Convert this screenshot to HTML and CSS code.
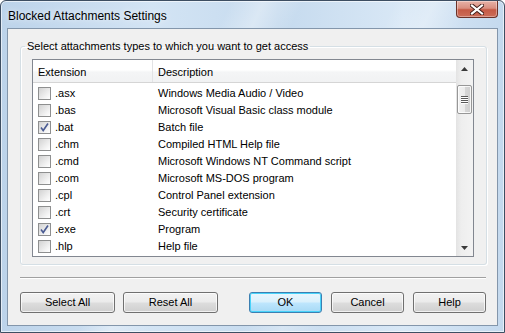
FILE: index.html
```html
<!DOCTYPE html>
<html>
<head>
<meta charset="utf-8">
<link rel="stylesheet" href="styles.css">
</head>
<body>
<div class="window">
  <div class="titlebar">
    <span class="title">Blocked Attachments Settings</span>
    <div class="close">
      <svg width="14" height="11" viewBox="0 0 14 11"><path d="M2 1.5 L12 9.5 M12 1.5 L2 9.5" stroke="#3d1a16" stroke-width="4" stroke-linecap="square"/><path d="M2 1.5 L12 9.5 M12 1.5 L2 9.5" stroke="#fff" stroke-width="2.2" stroke-linecap="square"/></svg>
    </div>
  </div>
  <div class="client">
    <fieldset class="group">
      <legend class="legend">Select attachments types to which you want to get access</legend>
      <div class="list">
        <div class="list-main">
          <div class="header">
            <div class="hcell hext">Extension</div>
            <div class="hcell hdesc">Description</div>
          </div>
          <div class="rows">
            <div class="row"><span class="cb"></span><span class="ext">.asx</span><span class="desc">Windows Media Audio / Video</span></div>
            <div class="row"><span class="cb"></span><span class="ext">.bas</span><span class="desc">Microsoft Visual Basic class module</span></div>
            <div class="row"><span class="cb checked"><svg width="11" height="11" viewBox="0 0 11 11"><path d="M2 5.5 L4.2 8.5 L9 1.5" fill="none" stroke="#4b5c93" stroke-width="1.6"/></svg></span><span class="ext">.bat</span><span class="desc">Batch file</span></div>
            <div class="row"><span class="cb"></span><span class="ext">.chm</span><span class="desc">Compiled HTML Help file</span></div>
            <div class="row"><span class="cb"></span><span class="ext">.cmd</span><span class="desc">Microsoft Windows NT Command script</span></div>
            <div class="row"><span class="cb"></span><span class="ext">.com</span><span class="desc">Microsoft MS-DOS program</span></div>
            <div class="row"><span class="cb"></span><span class="ext">.cpl</span><span class="desc">Control Panel extension</span></div>
            <div class="row"><span class="cb"></span><span class="ext">.crt</span><span class="desc">Security certificate</span></div>
            <div class="row"><span class="cb checked"><svg width="11" height="11" viewBox="0 0 11 11"><path d="M2 5.5 L4.2 8.5 L9 1.5" fill="none" stroke="#4b5c93" stroke-width="1.6"/></svg></span><span class="ext">.exe</span><span class="desc">Program</span></div>
            <div class="row"><span class="cb"></span><span class="ext">.hlp</span><span class="desc">Help file</span></div>
          </div>
        </div>
        <div class="scrollbar">
          <div class="arrow"><svg width="7" height="4" viewBox="0 0 7 4"><path d="M0 4 L3.5 0 L7 4 Z" fill="#3a3a3a"/></svg></div>
          <div class="thumb"><span class="grip"></span><span class="grip"></span><span class="grip"></span><span class="grip"></span></div>
          <div class="track"></div>
          <div class="arrow"><svg width="7" height="4" viewBox="0 0 7 4"><path d="M0 0 L7 0 L3.5 4 Z" fill="#3a3a3a"/></svg></div>
        </div>
      </div>
    </fieldset>
    <div class="separator"></div>
    <div class="buttons">
      <div class="left-btns">
        <button class="btn wide">Select All</button>
        <button class="btn wide">Reset All</button>
      </div>
      <div class="right-btns">
        <button class="btn default">OK</button>
        <button class="btn">Cancel</button>
        <button class="btn">Help</button>
      </div>
    </div>
  </div>
</div>
</body>
</html>
```
FILE: styles.css
```css
* { box-sizing: border-box; }
html, body { margin: 0; padding: 0; }
body {
  width: 505px;
  height: 333px;
  background: #fff;
  font-family: "Liberation Sans", Arial, sans-serif;
  font-size: 11px;
  color: #000;
}
.window {
  width: 505px;
  height: 333px;
  border: 1px solid #3d4e62;
  border-radius: 6px 6px 0 0;
  padding: 0 6px 6px 6px;
  display: flex;
  flex-direction: column;
  background:
    linear-gradient(115deg, rgba(255,255,255,0) 0%, rgba(255,255,255,0) 35%, rgba(255,255,255,0.35) 40%, rgba(255,255,255,0) 46%, rgba(255,255,255,0) 60%, rgba(255,255,255,0.3) 66%, rgba(255,255,255,0) 72%),
    linear-gradient(90deg, #bcd3ea 0%, #d3e4f4 30%, #c5daee 55%, #d9e8f6 80%, #c4d9ee 100%);
  box-shadow: inset 0 0 0 1px rgba(255,255,255,0.6);
}
.titlebar {
  height: 27px;
  display: flex;
  align-items: flex-start;
}
.title {
  padding: 8px 0 0 1px;
  font-size: 12px;
  line-height: 14px;
  color: #000;
  text-shadow: 0 0 6px rgba(255,255,255,0.9);
}
.close {
  margin-left: auto;
  width: 42px;
  height: 17px;
  border: 1px solid #6b3128;
  border-top: none;
  border-radius: 0 0 4px 4px;
  background: linear-gradient(180deg, #e7b2a7 0%, #d98f80 45%, #c55a45 55%, #cc6d59 100%);
  box-shadow: inset 0 0 0 1px rgba(255,255,255,0.35);
  display: flex;
  align-items: center;
  justify-content: center;
}
.close svg { display: block; }
.client {
  flex: 1;
  background: #f0f0f0;
  border: 1px solid #8396ab;
  padding: 11px 10px 0 12px;
  display: flex;
  flex-direction: column;
}
.group {
  margin: 0;
  padding: 6px 12px 8px 11px;
  border: 1px solid #d5dfe5;
  border-radius: 3px;
  box-shadow: inset 1px 1px 0 #fff, 1px 1px 0 #fff;
  height: 225px;
}
.legend {
  margin-left: -7px;
  padding: 0 2px;
  line-height: 13px;
  font-size: 11px;
}
.list {
  border: 1px solid #828790;
  background: #fff;
  display: flex;
  height: 198px;
}
.list-main {
  flex: 1;
  display: flex;
  flex-direction: column;
}
.header {
  height: 23px;
  display: flex;
  background: linear-gradient(180deg, #ffffff 0%, #ffffff 45%, #f4f5f6 55%, #f1f2f3 100%);
  border-bottom: 1px solid #d5d5d5;
}
.hcell {
  display: flex;
  align-items: center;
  padding-left: 5px;
  padding-top: 3px;
  line-height: 13px;
}
.hext {
  width: 120px;
  border-right: 1px solid #e2e3e5;
}
.hdesc { flex: 1; padding-left: 5px; }
.rows {
  padding-top: 2px;
  display: flex;
  flex-direction: column;
}
.row {
  height: 17px;
  display: flex;
  align-items: center;
  padding-left: 5px;
  line-height: 13px;
}
.cb {
  width: 13px;
  height: 13px;
  border: 1px solid #8e8f8f;
  background: linear-gradient(135deg, #d2d2d2 0%, #f3f3f3 70%, #ffffff 100%);
  display: flex;
  align-items: center;
  justify-content: center;
  flex-shrink: 0;
}
.cb svg { display: block; }
.ext {
  width: 105px;
  padding-left: 4px;
}
.desc { padding-left: 2px; }
.scrollbar {
  width: 17px;
  display: flex;
  flex-direction: column;
  align-items: center;
  background: linear-gradient(90deg, #e3e3e3 0%, #eeeeee 30%, #f3f3f3 100%);
}
.arrow {
  height: 17px;
  width: 17px;
  display: flex;
  align-items: center;
  justify-content: center;
}
.thumb {
  margin-top: 8px;
  width: 15px;
  height: 29px;
  border: 1px solid #979797;
  border-radius: 2px;
  background: linear-gradient(90deg, #f2f2f2 0%, #ebebeb 50%, #d6d6d6 55%, #cfcfcf 100%);
  box-shadow: inset 0 0 0 1px rgba(255,255,255,0.8);
  display: flex;
  flex-direction: column;
  align-items: center;
  justify-content: center;
  gap: 1px;
}
.grip {
  width: 7px;
  height: 1px;
  background: #5a5a5a;
  box-shadow: 0 1px 0 #fff;
}
.track { flex: 1; }
.separator {
  margin: 12px 1px 0 0;
  height: 2px;
  border-top: 1px solid #a0a0a0;
  border-bottom: 1px solid #fff;
}
.buttons {
  margin-top: 13px;
  display: flex;
  justify-content: space-between;
  padding-right: 1px;
}
.left-btns, .right-btns { display: flex; gap: 9px; }
.left-btns { gap: 8px; }
.btn {
  height: 21px;
  width: 73px;
  border: 1px solid #707070;
  border-radius: 3px;
  background: linear-gradient(180deg, #f2f2f2 0%, #ebebeb 48%, #dddddd 52%, #cfcfcf 100%);
  box-shadow: inset 0 0 0 1px rgba(255,255,255,0.7);
  font-family: "Liberation Sans", Arial, sans-serif;
  font-size: 11px;
  color: #000;
  padding: 0;
  line-height: 13px;
}
.btn.wide { width: 95px; }
.btn.default {
  border-color: #3c7fb1;
  background: linear-gradient(180deg, #eaf6fd 0%, #d9f0fc 48%, #bee6fd 52%, #a7d9f5 100%);
  box-shadow: inset 0 0 0 1px #48d3fa;
}
```
